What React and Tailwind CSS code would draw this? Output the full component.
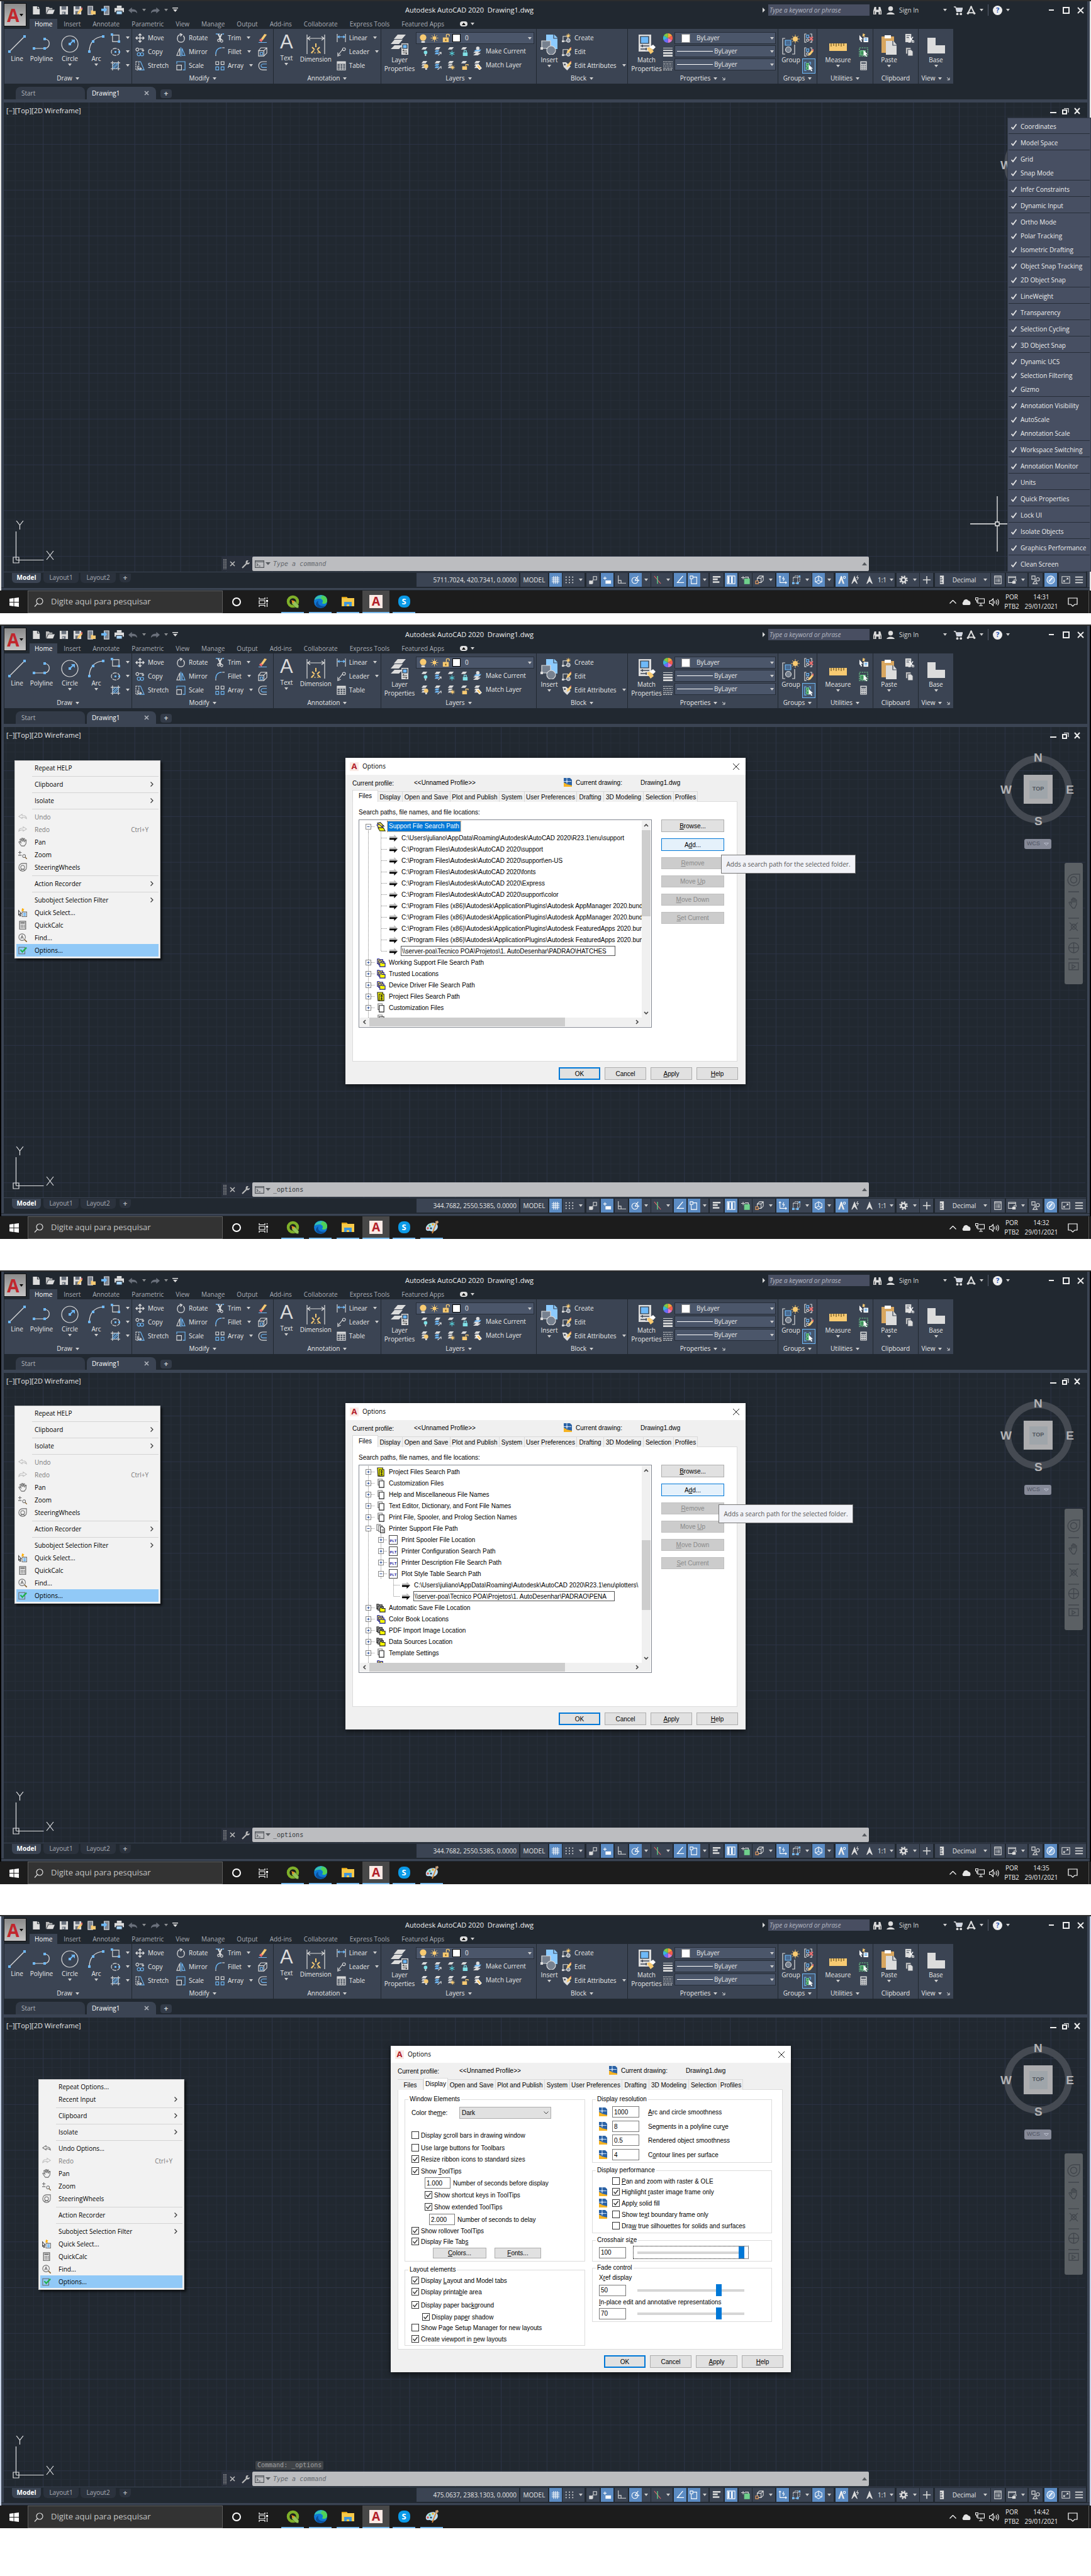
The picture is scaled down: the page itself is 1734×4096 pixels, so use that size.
import React from "react";

const UI = "font-['Open_Sans','Noto_Sans',sans-serif]";
const DLG = "font-['Liberation_Sans',Arial,sans-serif]";

/* ---------- drawing helpers ---------- */
const L = "#dcdcdc";
const B = "#6fb9f7";
const Y = "#f7ca72";

function Ic({ s = "size-[15px]", vb = "0 0 16 16", children, c = L }) {
  return (
    <svg className={`${s} shrink-0`} viewBox={vb} fill="none" stroke={c} strokeWidth="1.2" aria-hidden="true">
      {children}
    </svg>
  );
}

function Caret({ className = "" }) {
  return (
    <svg className={`h-[4px] w-[6px] shrink-0 ${className}`} viewBox="0 0 6 4" fill="#d0d0d0" aria-hidden="true">
      <path d="M0 0h6L3 4z" />
    </svg>
  );
}

const Bulb = ({ x = 0, y = 0 }) => (
  <g transform={`translate(${x} ${y})`} stroke="none">
    <circle cx="4" cy="4" r="3.6" fill={Y} />
    <rect x="2.6" y="7" width="2.8" height="3" fill={L} />
  </g>
);
const Sun = ({ cx = 8, cy = 8, r = 3, o = 6.5 }) => (
  <g stroke={Y}>
    <circle cx={cx} cy={cy} r={r} fill={Y} stroke="none" />
    <path
      d={`M${cx} ${cy - o}v${2 * o}M${cx - o} ${cy}h${2 * o}M${cx - o * 0.7} ${cy - o * 0.7}l${o * 1.4} ${o * 1.4}M${cx + o * 0.7} ${cy - o * 0.7}l${-o * 1.4} ${o * 1.4}`}
      strokeWidth="0.9"
    />
  </g>
);
const Sheets = ({ n = 3, blue = 0 }) => (
  <g stroke="none">
    {n > 2 && <path d="M3 13h6l2-3H5z" fill={blue > 1 ? B : L} />}
    {n > 1 && <path d="M3 9h6l2-3H5z" fill={blue > 0 ? B : L} />}
    <path d="M3 5h7l3-4H6z" fill={L} />
  </g>
);
const Pencil = () => (
  <g stroke="none">
    <path d="M7 15l1-4 5-6 3 2-5 6z" fill={Y} />
    <path d="M13 5l2-2 2 1.600-1 2.400z" fill="#f26d6d" />
  </g>
);

const icons = {
  newFile: <Ic><path d="M2.500 1h7v4.500H14V15H2.500z" fill={L} stroke="none" /><path d="M10.500 1L14 4.500h-3.500z" fill={L} stroke="none" /></Ic>,
  open: <Ic><path d="M1 14V2h5l1.500 2H12v2H5z" fill="#bbb" stroke="none" /><path d="M2 14l3.500-7H16l-3 7z" fill={L} stroke="none" /></Ic>,
  save: <Ic><path d="M1 1h14v14H1z" fill={L} stroke="none" /><path d="M4 1h8v6H4zM5 10h6v5H5z" fill="#6a727e" stroke="none" /><path d="M6 11.500h2V14H6z" fill={L} stroke="none" /></Ic>,
  saveAs: <Ic><path d="M1 1h13v14H1z" fill={L} stroke="none" /><path d="M4 1h7v5H4zM4 9h6v6H4z" fill="#6a727e" stroke="none" /><Pencil /></Ic>,
  openMob: <Ic><path d="M2 1h8v14H2z" fill="#7d8490" stroke={L} /><path d="M7 15V8h3l1 1h4v6z" fill={Y} stroke="none" /></Ic>,
  saveMob: <Ic><path d="M6 1h8v14H6z" fill="#7d8490" stroke={L} /><path d="M1 5h5V2l5 5-5 5V9H1z" fill={B} stroke="none" /></Ic>,
  print: <Ic><path d="M4 0h8v4H4z" fill={L} stroke="none" /><path d="M0 4h16v7H0z" fill={L} stroke="none" /><path d="M3 9h10v6H3z" fill="#a9d6fb" stroke="#222831" /></Ic>,
  undo: <Ic c="#6a707b"><path d="M0 8l6-5v3c6 0 9 2 9 7-2-3-4-3-9-3v3z" fill="#6a707b" stroke="none" /></Ic>,
  redo: <Ic c="#6a707b"><path d="M16 8l-6-5v3c-6 0-9 2-9 7 2-3 4-3 9-3v3z" fill="#6a707b" stroke="none" /></Ic>,
  line: <Ic s="h-[30px] w-[30px]" vb="0 0 30 30"><path d="M4 26L26 4" /><path d="M1 25h4v4H1zM25 1h4v4h-4z" fill={B} stroke="none" /></Ic>,
  poly: <Ic s="h-[30px] w-[30px]" vb="0 0 30 30"><path d="M3 22h17c9-1 10-13 1-15" /><path d="M1 20h4v4H1zM18 20h4v4h-4zM18 5h4v4h-4z" fill={B} stroke="none" /></Ic>,
  circle: <Ic s="h-[30px] w-[30px]" vb="0 0 30 30"><circle cx="15" cy="15" r="13" /><path d="M15 15l6-6" stroke={B} strokeWidth="2" /><path d="M17 8h6v6z" fill={B} stroke="none" /><path d="M13 13h4v4h-4z" fill={B} stroke="none" /></Ic>,
  arc: <Ic s="h-[30px] w-[30px]" vb="0 0 30 30"><path d="M4 27C4 14 11 4 26 3" /><path d="M2 25h4v4H2zM24 1h4v4h-4zM8 9h4v4H8z" fill={B} stroke="none" /></Ic>,
  rect: <Ic><path d="M3 3h11v11H3z" /><path d="M0 0h4v4H0zM12 12h4v4h-4z" fill={B} stroke="none" /></Ic>,
  ellipse: <Ic><ellipse cx="8" cy="8" rx="7" ry="6" strokeDasharray="7 1.500" /><path d="M6.500 6.500h3v3h-3zM13 6.500h3v3h-3z" fill={B} stroke="none" /></Ic>,
  hatch: <Ic><path d="M3 0v16M13 0v16M0 3h16M0 13h16" /><path d="M3 8l5-5M3 12l9-9M5 13l8-8M9 13l4-4" stroke={B} /></Ic>,
  move: <Ic><path d="M8 1v14M1 8h14M5.500 3.500L8 1l2.500 2.500M5.500 12.500L8 15l2.500-2.500M3.500 5.500L1 8l2.500 2.500M12.500 5.500L15 8l-2.500 2.500" strokeWidth="1.500" /></Ic>,
  copy: <Ic><circle cx="3.500" cy="4" r="2.500" /><path d="M7 3h6v4M11 5l2 2 2-2" /><circle cx="6" cy="12" r="2.700" stroke={B} /><circle cx="11.500" cy="12" r="2.700" stroke={B} /></Ic>,
  stretch: <Ic><path d="M1 1h5v14H1z" strokeDasharray="3 1" /><path d="M6 1h3l6 14H6" stroke={B} /><path d="M4 8v5h6M8 11l2.500 2L8 15" /></Ic>,
  rotate: <Ic><path d="M9 2C4 2 2 5 2 9s3 6 6 6 6-2 6-6c0-2-1-4-2-5M6 0l4 2-3 3" strokeWidth="1.400" /></Ic>,
  mirror: <Ic><path d="M1 14L6 2v12z" /><path d="M15 14L10 2v12z" stroke={B} /><path d="M8 0v16" stroke={B} /></Ic>,
  scale: <Ic><path d="M1 15V7h8v8z" /><path d="M1 5V1h14v14h-4" stroke={B} /></Ic>,
  trim: <Ic><path d="M1 1h4M6 1h2M12 1h3" stroke={B} strokeWidth="1.500" /><path d="M5 1l5 10M11 1L7 10" strokeWidth="2.200" /><circle cx="6" cy="12" r="2" /><circle cx="11" cy="13" r="2" /></Ic>,
  fillet: <Ic><path d="M1 15v-3" /><path d="M1 12C1 5 5 1 11 1" stroke={B} strokeWidth="1.500" /><path d="M12 1h4" /></Ic>,
  array: <Ic><path d="M1 1h5v5H1zM10 1h5v5h-5z" /><path d="M1 10h5v5H1zM10 10h5v5h-5z" stroke={B} /></Ic>,
  erase: <Ic><path d="M4 11l7-10 4 1-7 10z" fill={Y} stroke="none" /><path d="M2 12l2-3 4 2-2 4z" fill="#f26d6d" stroke="none" /><path d="M1 15.500h14" stroke={B} /></Ic>,
  explode: <Ic><path d="M1 6h9v9H1zM1 6l4-5h10v9l-5 5M10 6l5-5" /><path d="M4 9h4v4H4z" stroke={B} /></Ic>,
  offset: <Ic><path d="M15 1H8C-1 1-1 15 8 15h7" stroke={L} /><path d="M15 5H9c-5 0-5 6 0 6h6" stroke={B} /></Ic>,
  dim: <Ic s="h-[31px] w-[30px]" vb="0 0 30 31"><path d="M1 0v31M29 0v31M2 6h26M6 3L2 6l4 3M24 3l4 3-4 3" /><path d="M8 29l4-4M15 20v-6M22 29l-4-4M9 20l4 4M21 20l-4 4" stroke={Y} strokeWidth="2" /><path d="M7 29h16" stroke={Y} strokeDasharray="3 2" /></Ic>,
  linear: <Ic><path d="M1 1v14M15 1v14" /><path d="M2 6h12M5 4L2 6l3 2M11 4l3 2-3 2" stroke={B} /></Ic>,
  leader: <Ic><circle cx="12.500" cy="3.500" r="2.500" /><path d="M10 4L3 13M2 9v6l5-2" /></Ic>,
  table: <Ic><path d="M1 1h14v14H1zM1 5h14M1 8.500h14M1 12h14M6 5v10M10.500 5v10" /><path d="M1 1h14v3H1z" fill={L} stroke="none" /></Ic>,
  layerBig: <Ic s="h-[32px] w-[30px]" vb="0 0 30 32"><g stroke="none" fill={L}><path d="M6 7h13l6-7H12zM1 15h13l6-7H7zM1 23h13l6-6H7z" /><path d="M18 14h11v18H18z" /></g><path d="M20 16h7v6h-7z" fill={B} stroke="#222831" /><path d="M20 26h7M20 29h7M22 24l-2 2M25 31l2-2" stroke="#444" /></Ic>,
  lockBig: <Ic><path d="M3 7h10v8H3z" fill={Y} stroke="none" /><path d="M9 7V3c0-2 5-2 5 0v2" stroke={Y} strokeWidth="1.500" /><path d="M7 10h2v3H7z" fill="#7a5c20" stroke="none" /></Ic>,
  bulbTop: <Ic><path d="M5 13h6v3H5z" fill={L} stroke="none" /><circle cx="8" cy="7" r="5.500" fill={Y} stroke="none" /></Ic>,
  sun: <Ic><Sun /></Ic>,
  lyOff: <Ic><Sheets n={1} /><circle cx="10" cy="10" r="3" fill="#7fe0e6" stroke="none" /><path d="M9 13h2v3H9z" fill={L} stroke="none" /></Ic>,
  lyIso: <Ic><Sheets blue={2} /><path d="M9 15l5-5M14 13v-3h-3" /></Ic>,
  lyFreeze: <Ic><Sheets n={1} /><path d="M10 7v9M6 9.500l8 4M14 9.500l-8 4" stroke="#55cfd8" /></Ic>,
  lyLock: <Ic><Sheets n={1} /><path d="M6 10h8v6H6z" fill="#7fe0e6" stroke="none" /><path d="M8 10V7h4v3" stroke="#7fe0e6" /></Ic>,
  lyCur: <Ic><path d="M1 15h8l5-4H6zM1 11h8l5-4H6z" fill={L} stroke="none" /><path d="M2 8h10l3-3H6z" fill={B} stroke="none" /><circle cx="9" cy="3" r="3" fill={L} stroke="none" /></Ic>,
  lyOn: <Ic><Sheets /><Bulb x={7} y={6} /></Ic>,
  lyUniso: <Ic><Sheets blue={2} /><path d="M8 16l6-6M14 14v-4" stroke={L} /></Ic>,
  lyThaw: <Ic><Sheets /><Sun cx={11} cy={12} r={2} o={4} /></Ic>,
  lyUnlock: <Ic><Sheets n={1} /><path d="M5 10h8v6H5z" fill={Y} stroke="none" /><path d="M11 10V7h4v2" stroke={Y} /></Ic>,
  lyMatch: <Ic><Sheets /><path d="M6 9l4-2 5 6-3 3z" fill={Y} stroke="#fff" /></Ic>,
  insert: <Ic s="h-[32px] w-[30px]" vb="0 0 30 32"><path d="M10 0h13l5 5v18H10z" fill="#8ccbff" stroke="none" /><path d="M22 0v6h6" stroke="#3b4453" /><path d="M3 10h14v12H3z" fill="#77818f" /><circle cx="18" cy="25" r="7" fill="#77818f" /><path d="M1 20h4v4H1z" fill={L} stroke="none" /></Ic>,
  create: <Ic><path d="M2 5h8v8H2z" /><circle cx="11" cy="12" r="3" fill="#8a93a0" /><path d="M0 12h4v3H0z" fill={L} stroke="none" /><Sun cx={11} cy={4} r={2} o={4} /></Ic>,
  edit: <Ic><path d="M2 4h8v9H2z" /><circle cx="11" cy="12" r="3" fill="#8a93a0" /><path d="M0 12h4v3H0z" fill={L} stroke="none" /><g transform="translate(1 -4)"><Pencil /></g></Ic>,
  editAttr: <Ic><path d="M1 2h6l8 7-6 7-6-6z" fill={L} stroke="none" /><circle cx="5" cy="6" r="1.500" fill="#3b4453" stroke="none" /><g transform="translate(1 -4)"><Pencil /></g></Ic>,
  match: <Ic s="h-[32px] w-[30px]" vb="0 0 30 32"><path d="M2 0h20v27H2z" fill={L} stroke="none" /><path d="M5 3h13v11H5z" fill={B} stroke="#222831" /><path d="M5 18h14M5 23h10M8 16v4M14 21v4" stroke="#3b4453" strokeWidth="1.500" /><path d="M15 22l6-3 5 8-5 4z" fill={Y} stroke="none" /><path d="M19 20l6-4 4 4-4 4z" fill="#fff" stroke="none" /></Ic>,
  wheel: <Ic><g stroke="none"><path d="M8 8V0a8 8 0 0 1 7 4z" fill="#f7a13a" /><path d="M8 8l7-4a8 8 0 0 1 0 8z" fill="#f25c4c" /><path d="M8 8l7 4a8 8 0 0 1-7 4z" fill="#e07bd0" /><path d="M8 8v8a8 8 0 0 1-7-4z" fill="#6b6bff" /><path d="M8 8l-7 4a8 8 0 0 1 0-8z" fill="#38b6d8" /><path d="M8 8L1 4a8 8 0 0 1 7-4z" fill="#7fc943" /></g></Ic>,
  lw: <Ic><g stroke={L}><path d="M0 1.500h16" strokeWidth="1" /><path d="M0 5.500h16" strokeWidth="2" /><path d="M0 10h16" strokeWidth="3" /><path d="M0 14.500h16" strokeWidth="3" /></g></Ic>,
  lt: <Ic><path d="M0 1.500h16" strokeDasharray="1.500 1" /><path d="M0 5h16" strokeDasharray="4 1" /><path d="M0 8.500h16" strokeDasharray="2 1" /><path d="M0 12h16" strokeDasharray="5 1" /><path d="M0 15h16" strokeDasharray="3 1" /></Ic>,
  group: <Ic s="h-[32px] w-[30px]" vb="0 0 30 32"><path d="M6 6H2v25h4M17 31h4V16" /><path d="M6 9h9v8H6z" fill="#4a6a90" stroke={B} /><circle cx="11" cy="24" r="4.500" fill="#77818f" /><Sun cx={22} cy={7} r={4} o={7} /></Ic>,
  ungroup: <Ic><path d="M4 1H1v14h3M10 1h3v14h-3" /><path d="M4 3h4v4H4z" stroke={B} /><circle cx="6" cy="11.500" r="2" /><path d="M9 6l6 6M15 6l-6 6" stroke="#f26d6d" strokeWidth="2" /></Ic>,
  groupEdit: <Ic><path d="M4 1H1v14h3M10 1h3v5" /><path d="M4 3h4v4H4z" stroke={B} /><circle cx="6" cy="11.500" r="2" /><Pencil /></Ic>,
  groupSel: <Ic><path d="M4 1H1v14h3M8 1h3v4" stroke={B} /><path d="M4 3h4v4H4z" stroke="#6fd08c" fill="#3d8f5a" /><circle cx="6" cy="11" r="2.500" stroke="#6fd08c" fill="#3d8f5a" /><path d="M8 5l7 7h-3l2 4-2 .500-1.500-3.500-2.500 2z" fill="#fff" stroke="none" /></Ic>,
  measure: <Ic s="h-[32px] w-[28px]" vb="0 0 28 32"><path d="M0 14h28v12H0z" fill={Y} stroke="none" /><path d="M3 14v5M7 14v4M11 14v5M15 14v4M19 14v5M23 14v4" stroke="#6b5320" /></Ic>,
  qsel: <Ic><path d="M1 3l6 7H4l1.500 4-2 .700L2 11l-1 1z" fill="#fff" stroke="none" /><path d="M7 0l4 2-2 2 2 2-5-1z" fill={Y} stroke="none" /><path d="M8 7h8v8H8z" fill="#fff" stroke="none" /><path d="M9.500 9.500h5M9.500 12h5" stroke="#2b8be0" /></Ic>,
  selAll: <Ic><path d="M1 1h14v14H1z" strokeDasharray="2.500 1.500" stroke="#6fd08c" /><path d="M3 6h8v7H3z" fill="#3d8f5a" stroke="#6fd08c" /><path d="M8 5l7 7h-3l2 4-2 .500-1.500-3.500-2.500 2z" fill="#fff" stroke="none" /></Ic>,
  calc: <Ic><path d="M2.500 .500h11v15h-11z" fill={L} stroke="none" /><path d="M4 2h8v3H4z" fill="#565e6b" stroke="none" /><path d="M4 7.500h8M4 10.500h8M4 13.500h8" stroke="#565e6b" strokeDasharray="2 1" strokeWidth="1.600" /></Ic>,
  paste: <Ic s="h-[32px] w-[26px]" vb="0 0 26 32"><path d="M1 3h20v26H1z" fill="#d8a65f" stroke="none" /><path d="M6 1h10v5H6z" fill="#fff" stroke="none" /><path d="M8 10h12l5 6v16H8z" fill={L} stroke="none" /><path d="M19 10v7h6" stroke="#3b4453" /></Ic>,
  cut: <Ic><path d="M1 1h10v14H1z" fill={L} stroke="none" /><path d="M3 4h6M3 7h6" stroke="#565e6b" /><path d="M7 5l7 9M14 6l-6 8" stroke="#fff" strokeWidth="1.600" /><circle cx="8" cy="14" r="1.700" /><circle cx="14" cy="14" r="1.700" /></Ic>,
  copyClip: <Ic><path d="M2 1h8v10H2z" fill="#bbb" stroke="none" /><path d="M5 4h6l3 3v8H5z" fill={L} stroke="#3b4453" /></Ic>,
  base: <Ic s="h-[32px] w-[30px]" vb="0 0 30 32"><path d="M1 5h13v12h15v13H1z" fill={L} stroke="none" /></Ic>,
  binoc: <Ic><path d="M1 15V9l2-7h3v5h4V2h3l2 7v6h-5v-4H6v4z" fill={L} stroke="none" /><path d="M3 9v5M13 9v5" stroke="#444" /></Ic>,
  person: <Ic><circle cx="8" cy="5" r="4" fill={L} stroke="none" /><path d="M1 15c2-5 12-5 14 0z" fill={L} stroke="none" /></Ic>,
  cart: <Ic><path d="M1 2h3l2 8h8l2-6H5" fill="#cfd6e6" /><circle cx="7" cy="14" r="1.500" fill={L} /><circle cx="13" cy="14" r="1.500" fill={L} /></Ic>,
  a360: <Ic><path d="M8 2L3 12h10z" strokeWidth="2.200" /><circle cx="8" cy="2.500" r="1.800" fill={L} stroke="none" /><circle cx="2.500" cy="13" r="1.800" fill={L} stroke="none" /><circle cx="13.500" cy="13" r="1.800" fill={L} stroke="none" /></Ic>,
};

/* ---------- ribbon ---------- */
function Big({ icon, label, label2, caret, w }) {
  return (
    <button className={`flex ${w} shrink-0 flex-col items-center pt-[6px]`}>
      {icon}
      <span className="mt-[1px] leading-[14px]">{label}</span>
      {label2 && <span className="leading-[14px]">{label2}</span>}
      {caret && <Caret className="mt-[1px]" />}
    </button>
  );
}
function Small({ icon, label, caret, w = "" }) {
  return (
    <button className={`flex h-[22px] ${w} items-center gap-[5px] whitespace-nowrap`} aria-label={label || "tool"}>
      {icon}
      {label && <span>{label}</span>}
      {caret && <Caret className="ml-[4px]" />}
    </button>
  );
}
function Panel({ w, name, caret = true, launcher, children }) {
  return (
    <section className={`flex h-[87px] ${w} shrink-0 flex-col bg-[#3b4453]`}>
      <div className="flex h-[70px] px-[3px] pt-[3px]">{children}</div>
      <div className="flex h-[17px] items-center justify-center gap-[5px] whitespace-nowrap">
        <span>{name}</span>
        {caret && <Caret />}
        {launcher && (
          <svg className="ml-[2px] size-[6px]" viewBox="0 0 6 6" fill="none" stroke={L} aria-hidden="true"><path d="M1 1l4 4M5 1.500V5H1.500" /></svg>
        )}
      </div>
    </section>
  );
}
const dropBox = "flex h-[19px] items-center border border-[#262d38] bg-[#4b566a]";

function Ribbon() {
  return (
    <div className="flex h-[87px] gap-px overflow-hidden pl-[1px] text-[#e8e8e8]">
      <Panel w="w-[202px]" name="Draw">
        <Big icon={icons.line} label="Line" w="w-[34px]" />
        <Big icon={icons.poly} label="Polyline" w="w-[44px]" />
        <Big icon={icons.circle} label="Circle" caret w="w-[46px]" />
        <Big icon={icons.arc} label="Arc" caret w="w-[38px]" />
        <div className="pl-[4px]">
          <Small icon={icons.rect} caret /><Small icon={icons.ellipse} caret /><Small icon={icons.hatch} caret />
        </div>
      </Panel>
      <Panel w="w-[224px]" name="Modify">
        <div className="w-[65px] pl-[2px]">
          <Small icon={icons.move} label="Move" /><Small icon={icons.copy} label="Copy" /><Small icon={icons.stretch} label="Stretch" />
        </div>
        <div className="w-[63px] pl-[2px]">
          <Small icon={icons.rotate} label="Rotate" /><Small icon={icons.mirror} label="Mirror" /><Small icon={icons.scale} label="Scale" />
        </div>
        <div className="w-[69px] pl-[1px]">
          <Small icon={icons.trim} label="Trim" caret /><Small icon={icons.fillet} label="Fillet" caret /><Small icon={icons.array} label="Array" caret />
        </div>
        <div><Small icon={icons.erase} /><Small icon={icons.explode} /><Small icon={icons.offset} /></div>
      </Panel>
      <Panel w="w-[170px]" name="Annotation">
        <button className="flex w-[38px] flex-col items-center">
          <span className={`text-[31px] leading-[36px] text-[#dcdcdc] ${DLG}`}>A</span>
          <span className="leading-[14px]">Text</span>
          <Caret className="mt-[1px]" />
        </button>
        <Big icon={icons.dim} label="Dimension" w="w-[58px]" />
        <div className="pl-[4px]">
          <Small icon={icons.linear} label="Linear" caret /><Small icon={icons.leader} label="Leader" caret /><Small icon={icons.table} label="Table" />
        </div>
      </Panel>
      <Panel w="w-[246px]" name="Layers">
        <Big icon={icons.layerBig} label="Layer" label2="Properties" w="w-[52px]" />
        <div className="min-w-0 flex-1 pt-[2px]">
          <button className={`${dropBox} w-full gap-[3px] pr-[3px] pl-[3px]`}>
            {icons.bulbTop}{icons.sun}{icons.lockBig}
            <span className="size-[13px] border border-black bg-white" />
            <span className="ml-[4px]">0</span>
            <Caret className="ml-auto" />
          </button>
          <div className="flex h-[22px] items-center gap-[6px] pl-[6px] whitespace-nowrap">
            {icons.lyOff}{icons.lyIso}{icons.lyFreeze}{icons.lyLock}{icons.lyCur}<span>Make Current</span>
          </div>
          <div className="flex h-[22px] items-center gap-[6px] pl-[6px] whitespace-nowrap">
            {icons.lyOn}{icons.lyUniso}{icons.lyThaw}{icons.lyUnlock}{icons.lyMatch}<span>Match Layer</span>
          </div>
        </div>
      </Panel>
      <Panel w="w-[144px]" name="Block">
        <Big icon={icons.insert} label="Insert" caret w="w-[34px]" />
        <div className="pl-[3px]">
          <Small icon={icons.create} label="Create" /><Small icon={icons.edit} label="Edit" /><Small icon={icons.editAttr} label="Edit Attributes" caret />
        </div>
      </Panel>
      <Panel w="w-[238px]" name="Properties" launcher>
        <Big icon={icons.match} label="Match" label2="Properties" w="w-[53px]" />
        <div className="w-[18px]"><Small icon={icons.wheel} /><Small icon={icons.lw} /><Small icon={icons.lt} /></div>
        <div className="flex flex-1 flex-col gap-[2px] pt-[2px]">
          <button className={`${dropBox} pr-[2px] pl-[10px]`}>
            <span className="mr-[10px] h-[14px] w-[14px] border border-[#888] bg-white" />ByLayer<Caret className="ml-auto" />
          </button>
          {["weight", "type"].map((k) => (
            <button key={k} aria-label={`line ${k}`} className={`${dropBox} pr-[2px] pl-[3px]`}>
              <span className="mr-[2px] h-px w-[57px] bg-white" />ByLayer<Caret className="ml-auto" />
            </button>
          ))}
        </div>
      </Panel>
      <Panel w="w-[61px]" name="Groups">
        <Big icon={icons.group} label="Group" w="w-[34px]" />
        <div className="pl-[1px]">
          <div className="px-[3px]"><Small icon={icons.ungroup} /><Small icon={icons.groupEdit} /></div>
          <div className="border border-[#6fb9f7] bg-[#45566d] px-[2px]"><Small icon={icons.groupSel} w="h-[20px]" /></div>
        </div>
      </Panel>
      <Panel w="w-[88px]" name="Utilities">
        <Big icon={icons.measure} label="Measure" caret w="w-[60px]" />
        <div className="pl-[3px]"><Small icon={icons.qsel} /><Small icon={icons.selAll} /><Small icon={icons.calc} /></div>
      </Panel>
      <Panel w="w-[71px]" name="Clipboard" caret={false}>
        <Big icon={icons.paste} label="Paste" caret w="w-[44px]" />
        <div className="pl-[3px]"><Small icon={icons.cut} /><Small icon={icons.copyClip} /></div>
      </Panel>
      <Panel w="w-[55px]" name="View" launcher>
        <Big icon={icons.base} label="Base" caret w="w-full" />
      </Panel>
    </div>
  );
}

/* ---------- title, tabs ---------- */
const menuTabs = ["Home", "Insert", "Annotate", "Parametric", "View", "Manage", "Output", "Add-ins", "Collaborate", "Express Tools", "Featured Apps"];

function Header() {
  return (
    <header className="flex h-[44px] text-[#d8d8d8]">
      <button aria-label="Application menu" className="mt-[3px] flex h-[37px] w-[36px] shrink-0 items-center justify-center border border-[#111] bg-gradient-to-b from-[#8b8b8b] to-[#c4c4c4] text-[28px] leading-none font-bold text-[#c1272d]">
        A<Caret className="brightness-0" />
      </button>
      <div className="min-w-0 flex-1">
        <div className="flex h-[28px] items-center">
          <div className="flex w-[602px] shrink-0 items-center gap-[7px] pl-[8px]">
            {icons.newFile}{icons.open}{icons.save}{icons.saveAs}{icons.openMob}{icons.saveMob}{icons.print}{icons.undo}
            <Caret className="opacity-60" />{icons.redo}<Caret className="opacity-60" />
            <svg className="h-[8px] w-[9px]" viewBox="0 0 9 8" fill={L} aria-hidden="true"><path d="M0 0h9v1.500H0zM1 3h7L4.500 7z" /></svg>
          </div>
          <h1 className="text-[11px] whitespace-pre text-[#f0f0f0]">Autodesk AutoCAD 2020  Drawing1.dwg</h1>
          <div className="ml-auto flex items-center pr-[5px]">
            <svg className="h-[8px] w-[4px]" viewBox="0 0 4 8" fill={L} aria-hidden="true"><path d="M0 0l4 4-4 4z" /></svg>
            <input aria-label="Search" placeholder="Type a keyword or phrase" className="ml-[5px] h-[18px] w-[161px] bg-[#484e61] px-[2px] italic outline-none placeholder:text-[#b4b8c2]" />
            <span className="ml-[5px] flex w-[118px] items-center gap-[6px]">{icons.binoc}{icons.person}<span>Sign In</span><Caret className="ml-auto" /></span>
            <span className="ml-[10px] flex items-center gap-[6px]">{icons.cart}{icons.a360}<Caret /></span>
            <span className="mx-[7px] h-[18px] w-px bg-[#565e6b]" />
            <span className="flex size-[15px] items-center justify-center rounded-full bg-[#eee] text-[11px] font-bold text-[#2452b5]">?</span>
            <Caret className="ml-[6px]" />
            <span className="ml-[62px] h-[2px] w-[8px] bg-[#eee]" />
            <span className="ml-[14px] size-[11px] border-2 border-[#eee]" />
            <svg className="ml-[12px] size-[11px]" viewBox="0 0 11 11" stroke="#eee" strokeWidth="1.800" aria-hidden="true"><path d="M1 1l9 9M10 1l-9 9" /></svg>
          </div>
        </div>
        <nav className="flex h-[16px] items-center pl-[5px]">
          {menuTabs.map((t, i) => (
            <a key={t} href="#tab" className={i === 0 ? "flex h-[16px] items-center bg-[#3b4453] px-[8px] whitespace-nowrap text-white" : "pr-[9px] pl-[10px] whitespace-nowrap text-[#a9adb5]"}>{t}</a>
          ))}
          <span className="ml-[16px] flex h-[8px] w-[12px] items-center justify-center rounded-sm bg-[#e0e0e0]"><Caret className="rotate-180 brightness-0" /></span>
          <Caret className="ml-[5px]" />
        </nav>
      </div>
    </header>
  );
}

function FileTabs() {
  return (
    <div className="h-[30px] border-b-[5px] border-[#3b4453] pt-[5px] text-[#c8cbd0]">
      <div className="flex h-[20px] gap-[3px] pl-[19px]">
        <button className="w-[110px] rounded-t-[8px] bg-[#333b48] pl-[9px] text-left text-[#aeb2b9]">Start</button>
        <button className="flex w-[110px] items-center justify-between rounded-t-[8px] bg-[#3b4453] pr-[11px] pl-[8px] text-white">
          Drawing1
          <svg className="size-[8px]" viewBox="0 0 8 8" stroke="#b0b4bb" strokeWidth="1.600" aria-hidden="true"><path d="M1 1l6 6M7 1L1 7" /></svg>
        </button>
        <button className="mt-[4px] ml-[4px] h-[14px] w-[18px] rounded-[4px] bg-[#333b48] text-[12px] leading-[12px] font-bold">+</button>
      </div>
    </div>
  );
}

/* ---------- canvas ---------- */
function Grid({ id, oy }) {
  return (
    <svg className="absolute inset-0 h-full w-full" aria-hidden="true">
      <defs>
        <pattern id={id} x="62" y={oy} width="72.800" height="72.800" patternUnits="userSpaceOnUse">
          <path d="M14.560 0V72.800M29.120 0V72.800M43.680 0V72.800M58.240 0V72.800M0 14.560H72.800M0 29.120H72.800M0 43.680H72.800M0 58.240H72.800" stroke="#262d38" strokeWidth="1" />
          <path d="M.500 0V72.800M0 .500H72.800" stroke="#2c3345" strokeWidth="1.200" />
        </pattern>
      </defs>
      <rect width="100%" height="100%" fill={`url(#${id})`} />
    </svg>
  );
}

function ViewCube() {
  const c = "absolute text-[19px] font-bold leading-none text-[#b3b3b5]";
  return (
    <>
      <div className={`absolute top-[45px] right-[21px] size-[108px] rounded-full border-[11px] border-[#454a52] ${DLG}`}>
        <div className="absolute top-[20px] left-[20px] flex size-[46px] items-center justify-center bg-[#adadaf]">
          <div className="flex size-[29px] items-center justify-center bg-[#9fa5aa] text-[9px] font-bold text-[#50555c]">TOP</div>
        </div>
        <span className={`${c} -top-[17px] left-[36px]`}>N</span>
        <span className={`${c} -bottom-[17px] left-[37px]`}>S</span>
        <span className={`${c} top-[34px] -left-[17px]`}>W</span>
        <span className={`${c} top-[34px] -right-[14px]`}>E</span>
      </div>
      <button className={`absolute top-[178px] right-[54px] flex h-[16px] w-[43px] items-center justify-between rounded-[3px] bg-[#868a98] px-[4px] text-[9px] text-[#4e5362] ${DLG}`}>
        WCS<svg className="h-[5px] w-[8px]" viewBox="0 0 8 5" fill="none" stroke="#b5b9c8" aria-hidden="true"><path d="M.500.500h7L4 4z" /></svg>
      </button>
      <div className="absolute top-[216px] right-[4px] flex h-[193px] w-[29px] flex-col items-center gap-[12px] rounded-[3px] bg-[#5b6064] pt-[17px]">
        <svg className="h-[160px] w-[21px]" viewBox="0 0 21 160" fill="none" stroke="#41464c" strokeWidth="1.300" aria-hidden="true">
          <path d="M1 10a10 10 0 0 1 10-9h9v9a9.500 9.500 0 0 1-19 0z" /><circle cx="10.500" cy="10" r="5" />
          <path d="M2 29h17M5 50l-2-4 2-1 2 3v-7h2v5-7h2v7-6h2v6-4h2v7l-3 6H9z" />
          <path d="M2 71h17" /><path d="M4 78l13 13M17 78L4 91" /><circle cx="10.500" cy="84.500" r="4" />
          <path d="M2 103h17" /><circle cx="10.500" cy="118" r="8" /><path d="M2.500 118h16M10.500 110v16" />
          <path d="M2 136h17M3 142h15v11H3zM8 145l5 3-5 3z" />
        </svg>
      </div>
    </>
  );
}

function Canvas({ id, oy, h, command, history, cross }) {
  return (
    <div className={`relative mr-[3px] ${h} overflow-hidden bg-[#212830]`}>
      <Grid id={id} oy={oy} />
      <span className="absolute top-[5px] left-[4px] text-[11px] leading-[15px] text-[#e6e6e6]">[−][Top][2D Wireframe]</span>
      <svg className="absolute top-[8px] right-[8px] h-[11px] w-[48px]" viewBox="0 0 48 11" fill="none" stroke="#eee" strokeWidth="2" aria-hidden="true">
        <path d="M0 8h10M39 1l8 9M47 1l-8 9M20 4h6v6h-6z" /><path d="M22 1.500h7V8" strokeWidth="1.200" />
      </svg>
      <ViewCube />
      <svg className="absolute bottom-[12px] left-[14px] h-[70px] w-[70px]" viewBox="0 0 70 70" fill="none" stroke="#dfe0e2" strokeWidth="1.200" aria-hidden="true">
        <path d="M1 59h9v9H1zM5.500 63V18M5.500 63.500h44" />
        <path d="M54 49l11 14M65 49L54 63" />
      </svg>
      <svg className="absolute bottom-[67px] left-[19px] h-[14px] w-[13px]" viewBox="0 0 13 14" fill="none" stroke="#dfe0e2" strokeWidth="1.200" aria-hidden="true"><path d="M1 0l5.500 7L12 0M6.500 7v7" /></svg>
      {cross && (
        <svg className="absolute right-[95px] bottom-[31px] h-[90px] w-[90px]" viewBox="0 0 90 90" fill="none" stroke="#f0f0f0" strokeWidth="1.300" aria-hidden="true">
          <path d="M45 1v41M45 48v41M2 45h40M48 45h42M42 42h6v6h-6z" />
        </svg>
      )}
      {history && (
        <span className="absolute bottom-[27px] left-[400px] rounded-[2px] bg-[#3f4347] px-[3px] font-['DejaVu_Sans_Mono',monospace] text-[10px] leading-[14px] text-[#9fa1a3]">Command: _options</span>
      )}
      <div className="absolute bottom-[1px] left-[346px] flex h-[23px] w-[1029px]">
        <div className="flex w-[49px] items-center gap-[5px] bg-[#2a303c] px-[3px]">
          <svg className="h-[16px] w-[5px]" viewBox="0 0 5 16" stroke="#aaa" strokeWidth="1.500" strokeDasharray="1.500 1" aria-hidden="true"><path d="M1 0v16M4 0v16" /></svg>
          <svg className="size-[9px]" viewBox="0 0 9 9" stroke="#bbb" strokeWidth="1.600" aria-hidden="true"><path d="M1 1l7 7M8 1L1 8" /></svg>
          <svg className="ml-[5px] size-[14px]" viewBox="0 0 14 14" aria-hidden="true"><path d="M1 13l7-7" stroke="#bbb" strokeWidth="2.200" /><path d="M8 1c-2 2-2 5 0 6s5 0 5-3l-3 1-1-1 2-3z" fill="#bbb" /></svg>
        </div>
        <label className="flex flex-1 items-center rounded-[2px] bg-[#bcbdc0] pr-[3px] pl-[4px]">
          <svg className="h-[12px] w-[15px]" viewBox="0 0 15 12" fill="none" stroke="#55595e" strokeWidth="1.200" aria-hidden="true"><path d="M.600.600h13.800v10.800H.600zM.600 2.500h13.800M3 5l2 2-2 2M6 9h3" /></svg>
          <svg className="ml-[2px] h-[5px] w-[8px]" viewBox="0 0 8 5" fill="#55595e" aria-hidden="true"><path d="M0 0h8L4 4.500z" /></svg>
          <input aria-label="Command line" defaultValue={command} placeholder="Type a command" className="ml-[4px] min-w-0 flex-1 bg-transparent font-['DejaVu_Sans_Mono',monospace] text-[10px] text-[#33373b] outline-none placeholder:text-[#666a6f] placeholder:italic" />
          <svg className="h-[5px] w-[8px]" viewBox="0 0 8 5" fill="#55595e" aria-hidden="true"><path d="M0 5h8L4 0z" /></svg>
        </label>
      </div>
    </div>
  );
}

/* ---------- status bar ---------- */
const st = {
  grid: <path d="M4.500 1v14M8 1v14M11.500 1v14M1 4.500h14M1 8h14M1 11.500h14" />,
  dots: <path d="M1 3h14M1 8h14M1 13h14" strokeDasharray="2 4" strokeWidth="2" />,
  infer: <><path d="M8 2h6v6H8z" /><path d="M7 8v6H2" strokeWidth="1.200" /><path d="M1 10h5v5H1z" fill={L} /></>,
  dyn: <><path d="M1 5h6M4 2v6" /><path d="M5 9h10v6H5z" fill="#fff" stroke="none" /></>,
  ortho: <path d="M2 0v14h14M2 9h5v5" />,
  polar: <><circle cx="7" cy="9" r="5.500" /><path d="M7 9h8M7 9l6-8" /></>,
  iso: <><path d="M2 1l12 14" stroke="#e06666" /><path d="M8 1v14" stroke="#5fd08a" strokeWidth="1.600" /></>,
  otrack: <path d="M13 1L3 13h12" strokeWidth="1.600" />,
  osnap: <><path d="M3 3h10v12H3z" /><path d="M1 1h5v5H1z" fill="#5b8bc3" /></>,
  lwt: <path d="M1 2.500h14M1 7h9M1 12h12" strokeWidth="3" />,
  transp: <><path d="M1 1h14v14H1z" /><path d="M2 3.500h12M2 6.500h12M2 9.500h12M2 12.500h12" strokeDasharray="3 3" strokeWidth="3" /></>,
  cyc: <><path d="M6 6h9v9H6z" fill="#6fd08c" stroke="#6fd08c" /><path d="M0 4h7M3.500 1v6" /><path d="M7 3h6v3" /></>,
  osnap3: <><path d="M4 5h7v8H4zM4 5l4-4h7v8l-4 4M11 5l4-4" /><path d="M1 10h5v5H1z" stroke="#f2a15f" fill="#3b4453" /></>,
  ucs: <><path d="M3 1v12h12M1 3l2-2 2 2M13 11l2 2-2 2" /><path d="M10 2L8 6h3l-2 4" /></>,
  filt: <><path d="M2 4l4-3h8v9l-4 4M2 4v10h8V4zM10 4l4-3" stroke={L} strokeDasharray="2.500 1" /><path d="M0 12h4v4H0zM8 12h4v4H8zM12 0h3v3h-3z" fill={B} stroke="none" /></>,
  gizmo: <><path d="M8 1L2 4.500v7L8 15l6-3.500v-7z" /><path d="M8 1v8M8 9l-6 3M8 9l6 3" /></>,
  ann1: <><path d="M6 1L2 15h2.500L7 8l2.500 7H12L8 1z" fill={L} stroke="none" /><path d="M2 15l5-13 5 13" /><circle cx="12.500" cy="3.500" r="2" /></>,
  ann2: <><path d="M2 15l5-13 5 13L7 9z" fill={L} /><path d="M13 0l-2 4h3l-2 4" /></>,
  ann3: <path d="M3 15l5-13 5 13-5-5z" fill={L} />,
  gear: <><circle cx="8" cy="8" r="4" strokeWidth="3" /><circle cx="8" cy="8" r="6.500" strokeWidth="2.500" strokeDasharray="2.600 2.500" /></>,
  plus: <path d="M8 1v14M1 8h14" strokeWidth="1.800" />,
  units: <><path d="M5 1h6v14H5z" fill={L} /><path d="M5 4h3M5 7h4M5 10h3M5 13h4" stroke="#3b4453" /></>,
  qp: <><path d="M2 1h12v14H2zM2 3.500h12" /><path d="M4 6.500h8M4 9h8M4 11.500h8" strokeDasharray="2 1 5" /></>,
  lockui: <><path d="M8 13H1V2h13v5M1 4h13" /><path d="M8 10h6v5H8z" fill={L} stroke="none" /><path d="M11 10V8h4v2" /></>,
  isol: <><path d="M1 1h6v6H1z" /><circle cx="12" cy="7" r="3" /><path d="M7 9l4 6H3z" /></>,
  perf: <><circle cx="8" cy="8" r="7" fill="#88b1e0" /><path d="M5 11l6-7" strokeWidth="2" /></>,
  clean: <path d="M1 2h14v12H1zM4 11l3-3M4 8.500V11h2.500M12 5L9 8M12 7.500V5H9.500" />,
  ham: <path d="M1 3h14M1 8h14M1 13h14" strokeWidth="1.800" />,
};

const cells = [
  ["w-[20px]", "grid", 1], ["ml-px w-[22px]", "dots"], ["w-[13px]", "v"],
  ["ml-[3px] w-[21px]", "infer"], ["ml-[2px] w-[20px]", "dyn", 1], ["ml-[2px] w-[21px]", "ortho"], ["ml-[2px] w-[20px]", "polar", 1], ["w-[14px]", "v"],
  ["ml-px w-[19px]", "iso"], ["w-[15px]", "v"], ["ml-[2px] w-[20px]", "otrack", 1], ["ml-[2px] w-[20px]", "osnap", 1], ["w-[13px]", "v"],
  ["ml-[2px] w-[22px]", "lwt"], ["ml-[2px] w-[20px]", "transp", 1], ["ml-[2px] w-[21px]", "cyc"], ["ml-px w-[22px]", "osnap3"], ["w-[14px]", "v"],
  ["ml-[2px] w-[20px]", "ucs", 1], ["ml-px w-[21px]", "filt"], ["w-[14px]", "v"], ["ml-px w-[20px]", "gizmo", 1], ["w-[14px]", "v"],
  ["ml-[3px] w-[20px]", "ann1", 1], ["w-[22px]", "ann2"], ["w-[23px]", "ann3"], ["w-[18px]", "1:1", 2], ["w-[11px]", "v"],
  ["ml-[3px] w-[21px]", "gear"], ["w-[15px]", "v"], ["ml-px w-[21px]", "plus"],
  ["ml-[3px] w-[21px]", "units"], ["w-[51px]", "Decimal", 2], ["w-[16px]", "v"],
  ["ml-px w-[22px]", "qp"], ["ml-[2px] w-[20px]", "lockui"], ["w-[14px]", "v"], ["ml-[2px] w-[22px]", "isol"], ["ml-[3px] w-[20px]", "perf", 1],
  ["ml-[3px] w-[21px]", "clean"], ["w-[22px]", "ham"],
];

function StatusBar({ coords }) {
  return (
    <footer className="mr-[2px] flex h-[25px] border-t border-[#3b4453] text-[#e6e6e6]">
      <div className="flex h-[17px] items-center pl-[13px] text-[#a9adb5]">
        <button className="h-[16px] w-[46px] rounded-b-[6px] bg-[#3b4453] font-bold text-white">Model</button>
        <button className="ml-[4px] h-[16px] w-[56px] rounded-b-[6px] bg-[#2b323d]">Layout1</button>
        <button className="ml-[3px] h-[16px] w-[56px] rounded-b-[6px] bg-[#2b323d]">Layout2</button>
        <button className="ml-[6px] h-[14px] w-[18px] rounded-b-[6px] bg-[#2b323d] text-[12px] leading-none font-bold">+</button>
      </div>
      <div className="mt-px ml-auto flex h-[22px]">
        <span className="flex w-[163px] items-center justify-end bg-[#3b4453] pr-[4px] whitespace-nowrap">{coords}</span>
        <button className="mr-[2px] ml-[2px] w-[44px] bg-[#3b4453]">MODEL</button>
        {cells.map(([w, k, on], i) =>
          k === "v" ? (
            <button key={i} aria-label="More" className={`${w} flex items-center justify-center bg-[#3b4453]`}><Caret /></button>
          ) : on === 2 ? (
            <button key={i} className={`${w} bg-[#3b4453]`}>{k}</button>
          ) : (
            <button key={i} aria-label={k} className={`${w} flex items-center justify-center ${on ? "bg-[#5b8bc3]" : "bg-[#3b4453]"}`}>
              <Ic s="size-[14px]" c={on ? "#fff" : L}>{st[k]}</Ic>
            </button>
          )
        )}
      </div>
    </footer>
  );
}

/* ---------- Windows taskbar ---------- */
function TaskApp({ children, active, w = "w-[36px]" }) {
  return (
    <button className={`flex h-[36px] ${w} flex-col items-center border-b-2 border-[#76b9ed] ${active ? "bg-[#484848]" : ""}`}>
      <span className="flex flex-1 items-center">{children}</span>
    </button>
  );
}
function Taskbar({ time, paint }) {
  return (
    <div className={`flex h-[36px] items-stretch bg-[#1c1c1c] text-[#ececec] ${UI}`}>
      <button aria-label="Start" className="flex w-[44px] items-center justify-center">
        <svg className="size-[15px]" viewBox="0 0 15 15" fill="#fff" aria-hidden="true"><path d="M0 2l6.500-1v6H0zM7.500.900L15 0v7H7.500zM0 8h6.500v6L0 13zM7.500 8H15v7l-7.500-1z" /></svg>
      </button>
      <label className="flex w-[310px] items-center gap-[12px] border border-[#5d5d5d] bg-[#333] pl-[9px]">
        <svg className="size-[15px]" viewBox="0 0 15 15" fill="none" stroke="#ddd" strokeWidth="1.200" aria-hidden="true"><circle cx="9" cy="6" r="5" /><path d="M5.500 9.500L1 14.500" /></svg>
        <input aria-label="Pesquisar" placeholder="Digite aqui para pesquisar" className="min-w-0 flex-1 bg-transparent text-[13px] outline-none placeholder:text-[#c4c4c4]" />
      </label>
      <div className="flex w-[44px] items-center justify-center"><span className="size-[14px] rounded-full border-2 border-white" /></div>
      <div className="flex w-[41px] items-center justify-center">
        <svg className="size-[15px]" viewBox="0 0 15 15" fill="none" stroke="#fff" strokeWidth="1.200" aria-hidden="true"><path d="M1 0v2.500h9V0M1 15v-2.500h9V15M1 5h9v5H1zM13.500 0v2M13.500 8v7" /><path d="M12 4h3v3h-3z" fill="#fff" stroke="none" /></svg>
      </div>
      <div className="ml-[8px] flex gap-[8px]">
        <TaskApp>
          <svg className="size-[21px]" viewBox="0 0 21 21" aria-hidden="true"><circle cx="10.500" cy="10.500" r="7.500" fill="none" stroke="#7fb02a" strokeWidth="4.500" /><path d="M9 9l5 1 6 7-1 4-4-1-6-6z" fill="#93c45a" stroke="#3a5a10" strokeWidth=".5" /><path d="M8 8l5 2-2 4z" fill="#f08a24" /></svg>
        </TaskApp>
        <TaskApp>
          <svg className="size-[21px]" viewBox="0 0 21 21" aria-hidden="true"><circle cx="10.500" cy="10.500" r="10.500" fill="#0f78d4" /><path d="M.500 9C2-2 21-3 21 9c0 5-6 6-8 4 3-3 0-7-4-7-4 0-8 1-8.500 3z" fill="#35c1b0" /><path d="M13 1c6 1 8 5 8 8 0 5-6 6-8 4 2-2 2-6-2-7z" fill="#4fd158" /><path d="M7 9c-2 6 3 10 11 8-4 5-13 5-15-2 0-3 2-5 4-6z" fill="#0b4f9c" /></svg>
        </TaskApp>
        <TaskApp>
          <svg className="h-[17px] w-[20px]" viewBox="0 0 20 17" aria-hidden="true"><path d="M0 1h8l1.500 2H20v13H0z" fill="#f7c948" /><path d="M0 1h8v2H0z" fill="#e0a312" /><path d="M4 9h12v7h-4v-3H8v3H4z" fill="#3f96dc" /></svg>
        </TaskApp>
      </div>
      <div className="ml-[5px]">
        <TaskApp active w="w-[43px]"><span className="flex size-[21px] items-center justify-center bg-[#faeae5] text-[19px] leading-none font-bold text-[#b3202a]">A</span></TaskApp>
      </div>
      <div className="ml-[5px] flex gap-[8px]">
        <TaskApp><span className="flex size-[19px] items-center justify-center rounded-[8px] bg-[#0a9ae8] text-[13px] leading-none font-bold text-white">S</span></TaskApp>
        {paint && (
          <TaskApp>
            <svg className="size-[21px]" viewBox="0 0 21 21" aria-hidden="true"><path d="M1 14C-1 6 11 0 18 5c4 4 1 11-5 12-3 1-4-1-6-1s-5 1-6-2z" fill="#b9dcf2" /><circle cx="4" cy="12" r="1.700" fill="#e05545" /><circle cx="7" cy="8" r="1.700" fill="#5cb85c" /><circle cx="12" cy="6" r="1.700" fill="#f0b429" /><circle cx="9" cy="12" r="1.500" fill="#1c3d5a" /><path d="M18 2L11 20" stroke="#d98a3d" strokeWidth="2" /><path d="M16 1l4-1 1 3-4 3z" fill="#c9a27a" /></svg>
          </TaskApp>
        )}
      </div>
      <div className="ml-auto flex items-center text-center">
        <svg className="h-[6px] w-[11px]" viewBox="0 0 11 6" fill="none" stroke="#fff" strokeWidth="1.200" aria-hidden="true"><path d="M.500 5.500l5-5 5 5" /></svg>
        <svg className="ml-[8px] h-[10px] w-[15px]" viewBox="0 0 15 10" fill="#e5e5e5" aria-hidden="true"><path d="M3 10a3 3 0 0 1 0-5c0-3 5-6 8-2 4 0 5 7 1 7z" /></svg>
        <svg className="ml-[7px] h-[14px] w-[15px]" viewBox="0 0 15 14" fill="none" stroke="#fff" strokeWidth="1.100" aria-hidden="true"><path d="M6 2h8.500v7H4V5M9 9v4M6 13h6M.500.500h4V4h-4zM2.500 4v4" /></svg>
        <svg className="ml-[7px] h-[13px] w-[16px]" viewBox="0 0 16 13" fill="none" stroke="#fff" strokeWidth="1.100" aria-hidden="true"><path d="M.500 4.500h2.500L6.500 1v11L3 8.500H.500zM8.500 4.500q1.500 2 0 4M11 3q2.500 3.500 0 7M13.500 1.500q3.500 5 0 10" /></svg>
        <span className="ml-[8px] w-[24px] text-[10px] leading-[15px]">POR PTB2</span>
        <span className="ml-[8px] w-[54px] text-[10px] leading-[15px]">{time}<br />29/01/2021</span>
        <svg className="ml-[15px] h-[15px] w-[16px]" viewBox="0 0 16 15" fill="none" stroke="#fff" strokeWidth="1.200" aria-hidden="true"><path d="M1 1h14v10h-4l-3 3-3-3H1z" /></svg>
        <span className="mr-[3px] ml-[17px] h-[36px] w-px bg-[#555]" />
      </div>
    </div>
  );
}

/* ---------- context menu ---------- */
const gi = "#6b6b6b";
const cm = {
  undo: (c) => <path d="M1 7l6-4v2.500c5 0 8 1 8 5.500-2-2-4-2.500-8-2.500V11z" stroke={c} />,
  redo: (c) => <path d="M15 7L9 3v2.500c-5 0-8 1-8 5.500 2-2 4-2.500 8-2.500V11z" stroke={c} />,
  pan: () => <path d="M5 14L1 8l1.500-1L5 9 3 3l1.500-1L7 7 6.500 1h1.700L9 7l1-5.500h1.500L11.500 8 13 4h1.500L14 11l-3 4H6z" stroke={gi} />,
  zoom: () => <><path d="M0 4h6M3 1v6M0 9h6" stroke={gi} /><circle cx="10.500" cy="10.500" r="2.700" stroke={gi} /><path d="M12.500 12.500L16 16" stroke="#8a6a3c" strokeWidth="1.600" /></>,
  wheel: () => <><path d="M1 8a7 7 0 0 1 7-7h7v7A7 7 0 0 1 1 8z" stroke={gi} /><circle cx="8" cy="8" r="3.500" stroke={gi} /><path d="M4 14c1-3 7-3 8 0" stroke={gi} /></>,
  qsel: () => <><path d="M.500 4l5 6H3.500l1 4-1.500.500L2 11l-1.500 1.500z" stroke="#444" /><path d="M7 0l4 2-2 2 2 2-5-1z" fill="#ffae00" stroke="none" /><path d="M7 7h8.500v8.500H7z" stroke={gi} fill="#fff" /><path d="M9 9.500h5M9 11.500h5M9 13.500h5" stroke="#2b8be0" /></>,
  calc: () => <><path d="M2.500 1h11v14.500h-11z" stroke={gi} strokeWidth="1.500" /><path d="M4 4h8" stroke={gi} strokeWidth="2.500" /><path d="M4.500 8h8M4.500 10.500h8M4.500 13h8" stroke={gi} strokeDasharray="1.800 1" strokeWidth="1.600" /></>,
  find: () => <><circle cx="7" cy="7" r="6" stroke={gi} /><path d="M4.500 10L7 4l2.500 6M5.500 8h3" stroke={gi} /><path d="M11.500 11.500L16 16" stroke="#8a6a3c" strokeWidth="2" /></>,
  opt: () => <><path d="M1 2.500h11v12H1z" stroke={gi} fill="none" /><path d="M4 7l3.500 4L15 3" stroke="#22b14c" strokeWidth="2.600" /></>,
};
function ContextMenu({ pos, first, undo }) {
  const items = [
    ...first, 0, ["Clipboard", null, ">"], 0, ["Isolate", null, ">"], 0,
    [undo ? "Undo Options..." : "Undo", "undo", "", !undo], ["Redo", "redo", "Ctrl+Y", true], ["Pan", "pan"], ["Zoom", "zoom"], ["SteeringWheels", "wheel"],
    0, ["Action Recorder", null, ">"], 0, ["Subobject Selection Filter", null, ">"], ["Quick Select...", "qsel"], ["QuickCalc", "calc"], ["Find...", "find"], ["Options...", "opt"],
  ];
  return (
    <div role="menu" className={`absolute ${pos} w-[232px] border border-[#ccc] bg-[#f2f2f2] px-[2px] pt-px pb-[2px] text-[10px] text-black shadow-[3px_3px_3px_rgba(0,0,0,0.6)]`}>
      {items.map((it, i) =>
        it === 0 ? (
          <div key={i} className="mt-[3px] mb-[2px] ml-[25px] h-px bg-[#d4d4d4]" />
        ) : (
          <button key={i} role="menuitem" className={`flex h-[20px] w-full items-center ${it[3] ? "text-[#7a7a7a]" : ""} ${it[1] === "opt" ? "bg-[#91c9f7]" : ""}`}>
            <span className="flex w-[29px] pl-[3px]">{it[1] && <Ic s="size-[14px]">{cm[it[1]](it[3] ? "#bdbdbd" : gi)}</Ic>}</span>
            <span>{it[0]}</span>
            {it[2] === ">" ? (
              <svg className="mr-[8px] ml-auto h-[8px] w-[5px]" viewBox="0 0 5 8" fill="none" stroke="#333" strokeWidth="1.200" aria-hidden="true"><path d="M.500.500L4 4 .500 7.500" /></svg>
            ) : it[2] ? <span className="mr-[16px] ml-auto">{it[2]}</span> : null}
          </button>
        )
      )}
    </div>
  );
}

/* ---------- customization list ---------- */
const custom = [
  ["Coordinates"], ["Model Space"], ["Grid", "Snap Mode"], ["Infer Constraints"], ["Dynamic Input"], ["Ortho Mode", "Polar Tracking", "Isometric Drafting"],
  ["Object Snap Tracking", "2D Object Snap"], ["LineWeight"], ["Transparency"], ["Selection Cycling"], ["3D Object Snap"], ["Dynamic UCS", "Selection Filtering", "Gizmo"],
  ["Annotation Visibility", "AutoScale", "Annotation Scale"], ["Workspace Switching"], ["Annotation Monitor"], ["Units"], ["Quick Properties"], ["Lock UI"], ["Isolate Objects"], ["Graphics Performance"], ["Clean Screen"],
];
function CustomList() {
  return (
    <ul className="absolute right-0 bottom-[66px] w-[133px] border border-[#333b49] bg-[#474f62] px-[1px] pt-[2px] text-[#eee]">
      {custom.map((g, n) => (
        <li key={n} className={n ? "border-t border-[#262d38] pt-[3px]" : ""}>
          {g.map((t) => (
            <button key={t} className="flex h-[22px] w-full items-center gap-[6px] pl-[4px] whitespace-nowrap">
              <svg className="h-[9px] w-[9px]" viewBox="0 0 9 9" fill="none" stroke="#e6e6e6" strokeWidth="1.800" aria-hidden="true"><path d="M.500 5L3 8l5.500-7.500" /></svg>
              {t}
            </button>
          ))}
        </li>
      ))}
    </ul>
  );
}

/* ---------- options dialog ---------- */
function Dwg() {
  return (
    <svg className="h-[14px] w-[13px] shrink-0" viewBox="0 0 13 14" aria-hidden="true">
      <path d="M0 0h10l3 3v11H0z" fill="#2b62a5" /><path d="M0 7l5 3 8 2v2H0z" fill="#f6b322" /><path d="M0 5.500h12M5 0v9" stroke="#cfe0f5" /><circle cx="5" cy="5.500" r="1.500" fill="#cfe0f5" />
    </svg>
  );
}
const tabs = [["Files", "w-[41px]"], ["Display", "w-[39px]"], ["Open and Save", "w-[76px]"], ["Plot and Publish", "w-[78px]"], ["System", "w-[40px]"], ["User Preferences", "w-[83px]"], ["Drafting", "w-[43px]"], ["3D Modeling", "w-[63px]"], ["Selection", "w-[48px]"], ["Profiles", "w-[38px]"]];
const btn = "h-[20px] border border-[#adadad] bg-[#e1e1e1]";

function Dialog({ pos, tab, children }) {
  return (
    <section role="dialog" aria-label="Options" className={`absolute ${pos} flex h-[519px] w-[636px] flex-col bg-[#f0f0f0] text-[10px] text-black shadow-[0_2px_8px_rgba(0,0,0,0.6)] ${DLG}`}>
      <div className={`flex h-[27px] items-center bg-white px-[7px] text-[11px] ${UI}`}>
        <span className="mr-[6px] flex size-[14px] items-center justify-center bg-[#faeae5] text-[13px] leading-none font-bold text-[#b3202a]">A</span>
        <span className="text-[10px]">Options</span>
        <svg className="mr-[3px] ml-auto size-[10px]" viewBox="0 0 10 10" stroke="#222" aria-hidden="true"><path d="M0 0l10 10M10 0L0 10" /></svg>
      </div>
      <div className="flex h-[24px] items-center px-[11px]">
        <span className="w-[98px] pt-[2px]">Current profile:</span>
        <span className="w-[238px]">&lt;&lt;Unnamed Profile&gt;&gt;</span>
        <Dwg /><span className="ml-[6px] w-[103px]">Current drawing:</span><span>Drawing1.dwg</span>
      </div>
      <div role="tablist" className="relative z-10 -mb-px flex h-[19px] items-end pl-[11px]">
        {tabs.map(([t, w]) => (
          <button key={t} role="tab" className={`${w} border border-b-0 border-[#d9d9d9] whitespace-nowrap ${t === tab ? "h-[19px] bg-white pb-[2px]" : "h-[17px] border-l-0 bg-[#f0f0f0]"}`}>{t}</button>
        ))}
      </div>
      <div className="mx-[11px] mr-[13px] h-[414px] border border-[#dcdcdc] bg-white">{children}</div>
      <div className="mt-auto mb-[7px] flex justify-end gap-[7px] pr-[12px]">
        <button className="h-[20px] w-[66px] border-2 border-[#0078d7] bg-[#e1e1e1]">OK</button>
        <button className={`${btn} w-[66px]`}>Cancel</button>
        <button className={`${btn} w-[66px]`}><u>A</u>pply</button>
        <button className={`${btn} w-[66px]`}><u>H</u>elp</button>
      </div>
    </section>
  );
}

/* tree cells: | line, + / - box with stub, m first box, T stub, L last stub */
function TreeCell({ k }) {
  return (
    <svg className="h-[18px] w-[20px] shrink-0" viewBox="0 0 20 18" fill="none" stroke="#888" strokeDasharray="1 1" aria-hidden="true">
      {k !== " " && <path d={k === "L" ? "M10.500 0v9" : k === "m" ? "M10.500 9v9" : "M10.500 0v18"} />}
      {k !== " " && k !== "|" && <path d="M11 9.500h9" />}
      {(k === "+" || k === "-" || k === "m") && (
        <g strokeDasharray="none"><rect x="6.500" y="5.500" width="8" height="8" fill="#fff" stroke="#8a8a8a" /><path d={k === "+" ? "M8.500 9.500h4M10.500 7.500v4" : "M8.500 9.500h4"} stroke="#2a4f9a" /></g>
      )}
    </svg>
  );
}
const treeIcon = {
  folders: <><path d="M2 2h3l1 1h5v7H2z" fill="#ffef3a" stroke="#14149a" /><path d="M4 5h3l1 1h5v6H4z" fill="#ffef3a" stroke="#14149a" /><path d="M6 8h3l1 1h5v6H6z" fill="#ffff00" stroke="#14149a" /></>,
  foldersK: <><path d="M1 2h3l1 1h5v7H1z" fill="#aaa" stroke="#222" /><path d="M3 5h3l1 1h5v6H3z" fill="#aaa" stroke="#222" /><path d="M6 8h3l1 1h5v6H6z" fill="#ffff00" stroke="#222" /></>,
  openf: <><path d="M2 2l5-1 6 6H5z" fill="#ffef3a" stroke="#222" /><path d="M1 5l4-1 7 6H4z" fill="#ffef3a" stroke="#14149a" /><path d="M6 15L3 10h9l3 5z" fill="#ffff00" stroke="#3a3a10" /></>,
  book: <><path d="M2 1h9v14H3z" fill="#ffff00" stroke="#222" /><path d="M5 4h8v11H5z" fill="#ffff00" stroke="#222" /><path d="M8 6h2v3H8zM8 11h2v2H8z" stroke="#222" /></>,
  pages: <><path d="M3 1h7v10H3z" fill="#fff" stroke="#777" /><path d="M5 4h8v11H5z" fill="#fff" stroke="#222" /></>,
  pagesO: <><path d="M1 1h6v10H1z" fill="#fff" stroke="#777" /><path d="M4 3h6v10H4z" fill="#fff" stroke="#777" /><path d="M7 5h4l3 3v7H7z" fill="#fff" stroke="#222" /><path d="M9 10h4M9 12h4" stroke="#222" strokeWidth=".8" /></>,
  arrow: <><path d="M1 5h8V2l6 6H1z" fill="#bbb" stroke="none" /><path d="M1 8h14l-6 6v-3H1z" fill="#000" stroke="none" /></>,
};
function TreeIcon({ k }) {
  if (k === "plt")
    return (
      <span className="flex w-[20px] shrink-0 justify-center"><span className="flex h-[15px] w-[14px] items-end justify-center border border-[#444] bg-white font-['Liberation_Mono',monospace] text-[6px] leading-[8px] font-bold text-[#14149a]">PLT</span></span>
    );
  return <span className="flex w-[20px] shrink-0 justify-center"><Ic s="h-[15px] w-[15px]">{treeIcon[k]}</Ic></span>;
}

function FilesTab({ rows, thumb }) {
  return (
    <div className="px-[9px] pt-[11px]">
      <p className="leading-[12px]">Search paths, file names, and file locations:</p>
      <div className="mt-[5px] flex gap-[15px]">
        <div className="grid h-[331px] w-[466px] grid-cols-[minmax(0,1fr)_14px] grid-rows-[minmax(0,1fr)_14px] border border-[#828790] p-px">
          <div className="overflow-hidden">
            {rows.map(([cellsStr, icon, label, mode], i) => (
              <div key={i} className="flex h-[18px] items-center pl-[3px] whitespace-nowrap">
                {cellsStr.split("").map((c, j) => <TreeCell key={j} k={c} />)}
                <TreeIcon k={icon} />
                {mode === "edit" ? (
                  <input aria-label="Path" defaultValue={label} className={`ml-[2px] h-[16px] border border-[#555] bg-white pl-[1px] outline-none ${cellsStr.length > 2 ? "w-[320px]" : "w-[341px]"}`} />
                ) : (
                  <span className={mode === "sel" ? "ml-[1px] bg-[#0078d7] px-[2px] leading-[16px] text-white outline-1 outline-dotted outline-[#e08a3c]" : "ml-[3px]"}>{label}</span>
                )}
              </div>
            ))}
          </div>
          <div className="flex flex-col items-center bg-[#f0f0f0]">
            <svg className="h-[15px] w-[8px]" viewBox="0 0 8 15" fill="none" stroke="#444" strokeWidth="1.600" aria-hidden="true"><path d="M1 9l3-3 3 3" /></svg>
            <div className={`w-full bg-[#cdcdcd] ${thumb}`} />
            <svg className="mt-auto h-[15px] w-[8px]" viewBox="0 0 8 15" fill="none" stroke="#444" strokeWidth="1.600" aria-hidden="true"><path d="M1 6l3 3 3-3" /></svg>
          </div>
          <div className="flex items-center bg-[#f0f0f0]">
            <svg className="h-[8px] w-[15px]" viewBox="0 0 15 8" fill="none" stroke="#444" strokeWidth="1.600" aria-hidden="true"><path d="M9 1L6 4l3 3" /></svg>
            <div className="h-full w-[311px] bg-[#cdcdcd]" />
            <svg className="ml-auto h-[8px] w-[15px]" viewBox="0 0 15 8" fill="none" stroke="#444" strokeWidth="1.600" aria-hidden="true"><path d="M6 1l3 3-3 3" /></svg>
          </div>
          <div className="bg-[#f0f0f0]" />
        </div>
        <div className="flex w-[100px] flex-col gap-[10px]">
          <button className={btn}><u>B</u>rowse...</button>
          <button className="h-[20px] border border-[#0078d7] bg-[#e5f1fb]">A<u>d</u>d...</button>
          {[["", "R", "emove"], ["Move ", "U", "p"], ["", "M", "ove Down"], ["", "S", "et Current"]].map(([a, b, c]) => (
            <button key={c} disabled className="h-[19px] border border-[#bfbfbf] bg-[#cccccc] text-[#8a8a8a]">{a}<u>{b}</u>{c}</button>
          ))}
        </div>
      </div>
    </div>
  );
}
function Tip({ pos }) {
  return <div role="tooltip" className={`absolute ${pos} flex h-[30px] w-[214px] items-center justify-center border border-[#767676] bg-[#f1f2f7] text-[10px] whitespace-nowrap text-[#575757]`}>Adds a search path for the selected folder.</div>;
}

const pf = "C:\\Program Files\\Autodesk\\AutoCAD 2020\\";
const px = "C:\\Program Files (x86)\\Autodesk\\ApplicationPlugins\\Autodesk ";
const rows2 = [
  ["m", "openf", "Support File Search Path", "sel"],
  ["|T", "arrow", "C:\\Users\\juliano\\AppData\\Roaming\\Autodesk\\AutoCAD 2020\\R23.1\\enu\\support"],
  ["|T", "arrow", pf + "support"], ["|T", "arrow", pf + "support\\en-US"], ["|T", "arrow", pf + "fonts"], ["|T", "arrow", pf + "Express"], ["|T", "arrow", pf + "support\\color"],
  ["|T", "arrow", px + "AppManager 2020.bundle\\"], ["|T", "arrow", px + "AppManager 2020.bundle\\"], ["|T", "arrow", px + "FeaturedApps 2020.bundle"], ["|T", "arrow", px + "FeaturedApps 2020.bundle"],
  ["|L", "arrow", "\\\\server-poa\\Tecnico POA\\Projetos\\1. AutoDesenhar\\PADRAO\\HATCHES", "edit"],
  ["+", "folders", "Working Support File Search Path"], ["+", "folders", "Trusted Locations"], ["+", "folders", "Device Driver File Search Path"], ["+", "book", "Project Files Search Path"], ["+", "pages", "Customization Files"], ["|", "pages", ""],
];
const rows3 = [
  ["+", "book", "Project Files Search Path"], ["+", "pages", "Customization Files"], ["+", "pages", "Help and Miscellaneous File Names"], ["+", "pages", "Text Editor, Dictionary, and Font File Names"], ["+", "pages", "Print File, Spooler, and Prolog Section Names"],
  ["-", "pagesO", "Printer Support File Path"], ["|+", "plt", "Print Spooler File Location"], ["|+", "plt", "Printer Configuration Search Path"], ["|+", "plt", "Printer Description File Search Path"], ["|-", "plt", "Plot Style Table Search Path"],
  ["| T", "arrow", "C:\\Users\\juliano\\AppData\\Roaming\\Autodesk\\AutoCAD 2020\\R23.1\\enu\\plotters\\"],
  ["| L", "arrow", "\\\\server-poa\\Tecnico POA\\Projetos\\1. AutoDesenhar\\PADRAO\\PENA", "edit"],
  ["+", "foldersK", "Automatic Save File Location"], ["+", "folders", "Color Book Locations"], ["+", "foldersK", "PDF Import Image Location"], ["+", "foldersK", "Data Sources Location"], ["+", "pages", "Template Settings"], ["|", "folders", ""],
];

function Chk({ t, on, mt, dwg }) {
  const [a, b, c] = t;
  return (
    <label className={`flex h-[14px] items-center ${mt} whitespace-nowrap`}>
      {dwg && <span className="-ml-[21px] w-[21px]"><Dwg /></span>}
      <span className="mr-[3px] grid size-[12px]">
        <input type="checkbox" defaultChecked={on} className="peer col-start-1 row-start-1 size-[12px] appearance-none border border-[#333] bg-white" />
        <svg className="pointer-events-none col-start-1 row-start-1 hidden size-[12px] peer-checked:block" viewBox="0 0 12 12" fill="none" stroke="#333" strokeWidth="1.300" aria-hidden="true"><path d="M2.500 6l2.500 3 4.500-6" /></svg>
      </span>
      <span>{a}<u>{b}</u>{c}</span>
    </label>
  );
}
const box = "h-[18px] border border-[#7a7a7a] bg-white pl-[2px] outline-none";
const fs = "border border-[#dcdcdc] pl-[10px]";
const lg = "-ml-[5px] px-[2px] leading-[14px]";
const slider =
  "h-[19px] w-[170px] appearance-none bg-[linear-gradient(#d6d6d6,#d6d6d6)] bg-[length:100%_4px] bg-center bg-no-repeat [&::-webkit-slider-thumb]:h-[19px] [&::-webkit-slider-thumb]:w-[9px] [&::-webkit-slider-thumb]:appearance-none [&::-webkit-slider-thumb]:bg-[#0078d7]";

function DisplayTab() {
  return (
    <div className="flex gap-[11px] pt-[8px] pr-[16px] pl-[10px]">
      <div className="w-[287px]">
        <fieldset className={`${fs} h-[265px]`}>
          <legend className={lg}>Window Elements</legend>
          <label className="mt-[5px] flex h-[18px] items-center">
            <span className="w-[76px]">Color the<u>m</u>e:</span>
            <span className="grid w-[146px] items-center">
              <select className="col-start-1 row-start-1 h-[19px] appearance-none border border-[#adadad] bg-[#e1e1e1] pl-[3px]"><option>Dark</option></select>
              <svg className="pointer-events-none col-start-1 row-start-1 mr-[4px] h-[5px] w-[8px] justify-self-end" viewBox="0 0 8 5" fill="none" stroke="#444" aria-hidden="true"><path d="M.500.500L4 4 7.500.500" /></svg>
            </span>
          </label>
          <Chk mt="mt-[20px]" t={["Display ", "s", "croll bars in drawing window"]} />
          <Chk mt="mt-[6px]" t={["Use large buttons for Toolbars"]} />
          <Chk mt="mt-[4px]" on t={["Resize ribbon icons to standard sizes"]} />
          <Chk mt="mt-[5px]" on t={["Show ", "T", "oolTips"]} />
          <label className="mt-[3px] ml-[21px] flex items-center gap-[4px]"><input className={`${box} w-[41px]`} defaultValue="1.000" />Number of seconds before display</label>
          <div className="ml-[21px]">
            <Chk mt="mt-[3px]" on t={["Show shortcut keys in ToolTips"]} />
            <Chk mt="mt-[5px]" on t={["Show extended ToolTips"]} />
          </div>
          <label className="mt-[4px] ml-[28px] flex items-center gap-[4px]"><input className={`${box} w-[41px]`} defaultValue="2.000" />Number of seconds to delay</label>
          <Chk mt="mt-[2px]" on t={["Show rollover ToolTips"]} />
          <Chk mt="mt-[3px]" on t={["Display File Tab", "s"]} />
          <div className="mt-[3px] flex gap-[13px] pl-[34px]">
            <button className="h-[17px] w-[85px] border border-[#adadad] bg-[#e1e1e1]"><u>C</u>olors...</button>
            <button className="h-[17px] w-[74px] border border-[#adadad] bg-[#e1e1e1]"><u>F</u>onts...</button>
          </div>
        </fieldset>
        <fieldset className={`${fs} mt-[6px] h-[128px]`}>
          <legend className={lg}>Layout elements</legend>
          <Chk mt="mt-[3px]" on t={["Display ", "L", "ayout and Model tabs"]} />
          <Chk mt="mt-[4px]" on t={["Display printa", "b", "le area"]} />
          <Chk mt="mt-[7px]" on t={["Display paper bac", "k", "ground"]} />
          <div className="ml-[17px]"><Chk mt="mt-[5px]" on t={["Display pap", "e", "r shadow"]} /></div>
          <Chk mt="mt-[3px]" t={["Show Pa", "g", "e Setup Manager for new layouts"]} />
          <Chk mt="mt-[4px]" on t={["Create viewport in ", "n", "ew layouts"]} />
        </fieldset>
      </div>
      <div className="min-w-0 flex-1">
        <fieldset className={`${fs} h-[108px]`}>
          <legend className={lg}>Display resolution</legend>
          {[["1000", "mt-[4px]", "", "A", "rc and circle smoothness"], ["8", "mt-[5px]", "Segments in a polyline cur", "v", "e"], ["0.5", "mt-[4px]", "Rendered ob", "j", "ect smoothness"], ["4", "mt-[5px]", "C", "o", "ntour lines per surface"]].map(([v, mt, a, b, c]) => (
            <label key={v} className={`${mt} flex items-center`}><Dwg /><input className={`${box} mr-[14px] ml-[8px] w-[43px]`} defaultValue={v} /><span>{a}<u>{b}</u>{c}</span></label>
          ))}
        </fieldset>
        <fieldset className={`${fs} mt-[5px] h-[107px]`}>
          <legend className={lg}>Display performance</legend>
          <div className="ml-[21px]">
            <Chk mt="mt-[3px]" t={["", "P", "an and zoom with raster & OLE"]} />
            <Chk mt="mt-[3px]" dwg on t={["Highlight ", "r", "aster image frame only"]} />
            <Chk mt="mt-[4px]" dwg on t={["Appl", "y", " solid fill"]} />
            <Chk mt="mt-[4px]" dwg t={["Show te", "x", "t boundary frame only"]} />
            <Chk mt="mt-[4px]" t={["Dra", "w", " true silhouettes for solids and surfaces"]} />
          </div>
        </fieldset>
        <fieldset className={`${fs} mt-[4px] h-[41px]`}>
          <legend className={lg}>Crosshair si<u>z</u>e</legend>
          <div className="mt-[2px] flex items-center gap-[11px]">
            <input aria-label="Crosshair size" className={`${box} w-[43px]`} defaultValue="100" />
            <span className="flex h-[21px] w-[184px] items-center justify-center border border-dotted border-black"><input type="range" aria-label="Crosshair slider" max="100" defaultValue="100" className={slider} /></span>
          </div>
        </fieldset>
        <fieldset className={`${fs} mt-[3px] h-[93px]`}>
          <legend className={lg}>Fade control</legend>
          <p className="mt-[2px] leading-[14px]">X<u>r</u>ef display</p>
          <div className="mt-[3px] flex items-center gap-[18px]">
            <input aria-label="Xref display" className={`${box} w-[43px]`} defaultValue="50" />
            <input type="range" aria-label="Xref slider" max="90" defaultValue="70" className={slider} />
          </div>
          <p className="mt-[3px] leading-[14px]"><u>I</u>n-place edit and annotative representations</p>
          <div className="mt-[1px] flex items-center gap-[18px]">
            <input aria-label="In-place edit" className={`${box} w-[43px]`} defaultValue="70" />
            <input type="range" aria-label="In-place slider" max="90" defaultValue="70" className={slider} />
          </div>
        </fieldset>
      </div>
    </div>
  );
}

/* ---------- one desktop ---------- */
function Desktop({ id, oy, h = "h-[746px]", edge, coords, time, paint, command, history, cross, overlay }) {
  return (
    <div className={`relative text-[10px] ${UI}`}>
      <div className="h-[2px] bg-[#2d2d2d]" />
      <div className={`border-x-2 ${edge}`}>
        <div className="border-x-4 border-[#3b4453] bg-[#212830]">
          <Header />
          <Ribbon />
          <FileTabs />
          <Canvas id={id} oy={oy} h={h} command={command} history={history} cross={cross} />
          <StatusBar coords={coords} />
        </div>
        <div className="h-[5px] border-y border-[#212830] bg-[#3b4453]" />
      </div>
      <Taskbar time={time} paint={paint} />
      {overlay}
    </div>
  );
}

export default function App() {
  return (
    <main className="min-h-screen bg-white">
      <Desktop id="g1" oy="66" edge="border-[#e8e8e8]" coords="5711.7024, 420.7341, 0.0000" time="14:31" command="" cross overlay={<CustomList />} />
      <div className="h-[18px]" />
      <Desktop id="g2" oy="69" h="h-[748px]" edge="border-black" coords="344.7682, 2550.5385, 0.0000" time="14:32" paint command="_options"
        overlay={<>
          <ContextMenu pos="top-[216px] left-[23px]" first={[["Repeat HELP"]]} />
          <Dialog pos="top-[212px] left-[549px]" tab="Files"><FilesTab rows={rows2} thumb="h-[137px]" /></Dialog>
          <Tip pos="top-[366px] left-[1146px]" />
        </>} />
      <div className="h-[50px]" />
      <Desktop id="g3" oy="68" h="h-[747px]" edge="border-black" coords="344.7682, 2550.5385, 0.0000" time="14:35" paint command="_options"
        overlay={<>
          <ContextMenu pos="top-[215px] left-[23px]" first={[["Repeat HELP"]]} />
          <Dialog pos="top-[211px] left-[549px]" tab="Files"><FilesTab rows={rows3} thumb="mt-[103px] h-[111px]" /></Dialog>
          <Tip pos="top-[372px] left-[1142px]" />
        </>} />
      <div className="h-[49px]" />
      <Desktop id="g4" oy="65" edge="border-[#c8d4e8]" coords="475.0637, 2383.1303, 0.0000" time="14:42" paint command="" history
        overlay={<>
          <ContextMenu pos="top-[261px] left-[61px]" first={[["Repeat Options..."], ["Recent Input", null, ">"]]} undo />
          <Dialog pos="top-[208px] left-[621px]" tab="Display"><DisplayTab /></Dialog>
        </>} />
    </main>
  );
}
